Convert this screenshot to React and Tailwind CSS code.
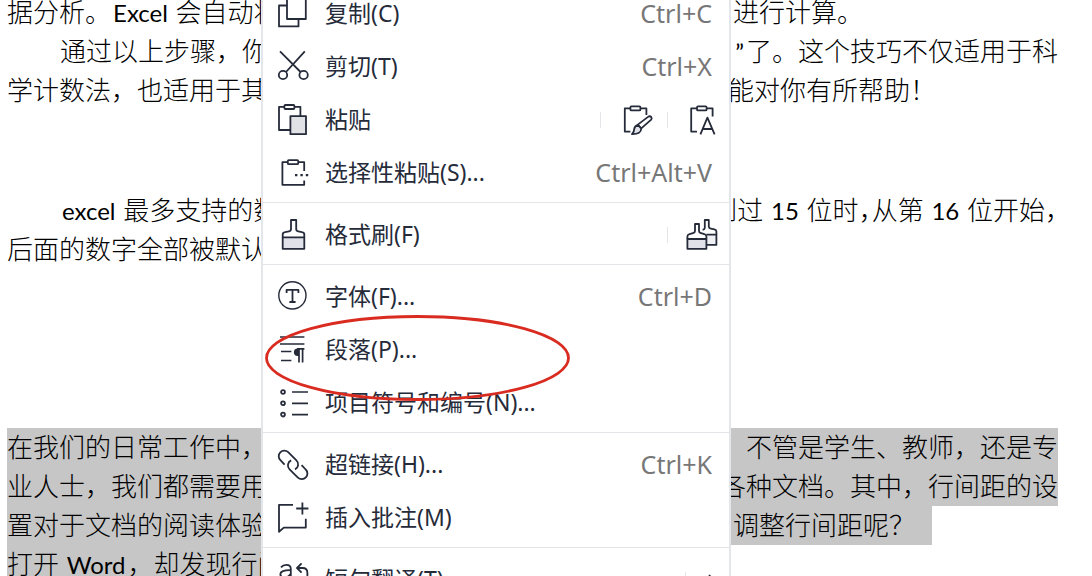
import React from "react";

const INK = "#262b3a";

function Icon({ children }) {
  return (
    <svg
      aria-hidden="true"
      viewBox="0 0 32 32"
      className="h-8 w-8 shrink-0 overflow-visible"
      fill="none"
      stroke={INK}
      strokeWidth="1.8"
      strokeLinejoin="round"
    >
      {children}
    </svg>
  );
}

const CopyIcon = () => (
  <Icon>
    <rect x="10" y="1" width="18.8" height="20" />
    <path d="M10 7.5H2V28.4H21.5V21" />
  </Icon>
);

const CutIcon = () => (
  <Icon>
    <circle cx="6" cy="24" r="4.2" />
    <circle cx="26.6" cy="24" r="4.2" />
    <path d="M3 .3 23.6 21M27.8 .3 9 21" />
  </Icon>
);

const PasteIcon = () => (
  <Icon>
    <path d="M7.4 2.8H2V26H13.4M17.4 2.8H23.4V12" />
    <rect x="7.4" y="1" width="10" height="4" rx="1" />
    <rect x="13.4" y="12.2" width="15.6" height="18" fill="#e1e2e6" />
  </Icon>
);

const PasteSpecialIcon = () => (
  <Icon>
    <path d="M10.8 5.2H5.4V27.8H27.2V23.5M21.2 5.2H27.2V14" />
    <rect x="10.8" y="3.2" width="10.4" height="4" rx="1" />
    <path d="M18 18.2h2.4M23.4 18.2h2.4M28.8 18.2h2.4" strokeWidth="2.2" />
  </Icon>
);

const BrushIcon = () => (
  <Icon>
    <path d="M5.7 18.4H27.3V29.8H5.7Z" fill="#e1e2e9" />
    <path d="M5.7 18.4V15.6Q5.7 13.6 8 13.2L12 12.4Q14 12 14 10V1H19.2V10Q19.2 12 21.2 12.4L25 13.2Q27.3 13.6 27.3 15.6V18.4" />
  </Icon>
);

const DoubleBrushIcon = () => (
  <Icon>
    <path d="M18.4 15.6H28.4V25.8H18.4" fill="#eef0f4" />
    <path d="M14.6 10.8Q16.8 10.4 16.8 9V1H20.8V7.6Q20.8 9.2 22.8 9.6L26.4 10.4Q28.4 10.9 28.4 12.4V15.6" />
    <path d="M-.6 20H18.4V29.8H-.6Z" fill="#e1e2e9" />
    <path d="M-.6 20V17.6Q-.6 15.7 1.4 15.2L5 14.2Q7 13.6 7 12V5H11V12Q11 13.6 13 14.2L16.4 15.2Q18.4 15.7 18.4 17.6V20" />
  </Icon>
);

const FontIcon = () => (
  <Icon>
    <circle cx="15.4" cy="14.4" r="13.6" strokeWidth="1.4" />
    <path d="M9.6 12V8.8H21.4V12M15.5 8.8V21M12.4 21H18.6" strokeWidth="1.8" />
  </Icon>
);

const ParagraphIcon = () => (
  <Icon>
    <path d="M3 3H27.4M3 10H27.4M4 17.6H14.4M4 26.4H14.4" strokeWidth="1.5" />
    <path d="M22 14.6H20.6A3.6 3.6 0 0 0 20.6 22H22Z" fill={INK} stroke="none" />
    <path d="M20 14.8H27.4M22 14.6V28.4M25.6 14.6V28.4" strokeWidth="1.7" />
  </Icon>
);

const ListIcon = () => (
  <Icon>
    <circle cx="6" cy="5" r="1.9" />
    <circle cx="6" cy="16.3" r="1.9" />
    <circle cx="6" cy="27.6" r="1.9" />
    <path d="M15 5H31M15 16.3H31M15 27.6H31" strokeWidth="1.7" />
  </Icon>
);

const LinkIcon = () => (
  <Icon>
    <path d="M7.6 15.6 3.4 11.2A5.5 5.5 0 0 1 11.2 3.2L19.4 11.4A5.5 5.5 0 0 1 18 20.4" />
    <path d="M24.6 16.2 28.7 20.5A5.5 5.5 0 0 1 20.9 28.6L12.6 20.4A5.5 5.5 0 0 1 14.2 11.4" />
  </Icon>
);

const CommentIcon = () => (
  <Icon>
    <path d="M16 2.8H2V29.8L6.8 25.6H28.8V16.8M25.4 .4V12.6M19.2 6.5H31.4" />
  </Icon>
);

const TranslateIcon = () => (
  <Icon>
    <path d="M4 3.4Q6 .8 9.4 .8Q13.8 .8 13.8 5V14M13.8 6.2Q3.4 6 3.4 10.2Q3.4 13.4 7.4 13.4Q11.8 13.4 13.8 9.8" />
    <path d="M24.6 -.6 20 4 24.6 8.6M20 4H25.6Q30.4 4 30.4 9V12" />
  </Icon>
);

const PasteFormatIcon = () => (
  <Icon>
    <path d="M9.4 4.4H3.8V27.6H9.4M19.4 4.4H25.4V11" />
    <rect x="9.4" y="2.4" width="10" height="4" rx="1" />
    <path d="M16.8 20.6 27.4 12.6Q29 11.8 30.2 13Q31.2 14.4 30.2 15.6L20 24.6Z" fill="#fff" />
    <path d="M11 30.2Q13.4 27.6 13.2 25Q13.8 21.6 16.8 20.8L20.2 24.4Q20.4 30.4 11 30.2Z" fill="#e1e2e9" />
  </Icon>
);

const PasteTextIcon = () => (
  <Icon>
    <path d="M9 4.4H3.2V27.6H9M18.6 4.4H24.6V12.4" />
    <rect x="9" y="2.4" width="9.6" height="4" rx="1" />
    <path d="M12.4 30.4 19.4 13.6 26.6 30.4M14.8 25H24.4" />
  </Icon>
);

function SideAction({ label, children }) {
  return (
    <>
      <span className="mr-5 h-4 w-px bg-[#e4e5e8]" />
      <button type="button" aria-label={label} className="flex">
        {children}
      </button>
    </>
  );
}

function Item({ icon, label, shortcut }) {
  return (
    <button type="button" role="menuitem" className="flex h-[53px] w-full items-center pr-[17px] pl-[14px] text-left">
      {icon}
      <span className="ml-4 flex-1 whitespace-nowrap">{label}</span>
      {shortcut && <span className="text-[25px] text-[#777777]">{shortcut}</span>}
    </button>
  );
}

function SplitItem({ icon, label, children }) {
  return (
    <div className="flex h-[53px] items-center pr-[9px]">
      <button type="button" role="menuitem" className="flex flex-1 items-center pl-[14px] text-left">
        {icon}
        <span className="ml-4 whitespace-nowrap">{label}</span>
      </button>
      <div className="flex items-center">{children}</div>
    </div>
  );
}

const Separator = () => <hr className="mt-[3px] mb-[5px] border-t border-[#e2e4e7]" />;

const Latin = ({ children }) => (
  <span className="mx-[2px] font-['Lato',sans-serif] text-[24px] leading-none font-normal">{children}</span>
);

const HalfComma = () => <span className="[font-feature-settings:'halt']">，</span>;

function Line({ left, right, indent, short }) {
  return (
    <div className={"flex h-[39px] justify-between whitespace-nowrap " + (indent ? "pl-[53px] " : "") + (short || "")}>
      <span>{left}</span>
      <span>{right}</span>
    </div>
  );
}

function ContextMenu() {
  return (
    <div
      role="menu"
      className="absolute -top-[13px] left-[261px] w-[470px] border-r-2 border-l-2 border-[#e3e7ec] bg-white font-['Noto_Sans','Noto_Sans_CJK_SC',sans-serif] text-[23px] text-[#262b3a]"
    >
      <Item icon={<CopyIcon />} label="复制(C)" shortcut="Ctrl+C" />
      <Item icon={<CutIcon />} label="剪切(T)" shortcut="Ctrl+X" />
      <SplitItem icon={<PasteIcon />} label="粘贴">
        <SideAction label="粘贴格式">
          <PasteFormatIcon />
        </SideAction>
        <span className="w-[14px]" />
        <SideAction label="只粘贴文本">
          <PasteTextIcon />
        </SideAction>
      </SplitItem>
      <Item icon={<PasteSpecialIcon />} label="选择性粘贴(S)..." shortcut="Ctrl+Alt+V" />
      <Separator />
      <SplitItem icon={<BrushIcon />} label="格式刷(F)">
        <SideAction label="连续格式刷">
          <DoubleBrushIcon />
        </SideAction>
      </SplitItem>
      <Separator />
      <Item icon={<FontIcon />} label="字体(F)..." shortcut="Ctrl+D" />
      <div className="relative">
        <Item icon={<ParagraphIcon />} label="段落(P)..." />
        <svg
          aria-hidden="true"
          viewBox="0 0 306 88"
          className="pointer-events-none absolute -top-[9px] left-px z-10 h-[88px] w-[306px]"
          fill="none"
          stroke="#d92b20"
          strokeWidth="2.8"
        >
          <ellipse cx="153.5" cy="44" rx="151" ry="41.5" />
        </svg>
      </div>
      <Item icon={<ListIcon />} label="项目符号和编号(N)..." />
      <Separator />
      <Item icon={<LinkIcon />} label="超链接(H)..." shortcut="Ctrl+K" />
      <Item icon={<CommentIcon />} label="插入批注(M)" />
      <Separator />
      <SplitItem icon={<TranslateIcon />} label="短句翻译(T)">
        <span className="mr-[18px] h-4 w-px bg-[#e4e5e8]" />
        <svg aria-hidden="true" viewBox="0 0 16 16" className="h-4 w-4" fill="none" stroke={INK} strokeWidth="1.6">
          <path d="M5 3 10 8 5 13" />
        </svg>
      </SplitItem>
    </div>
  );
}

export default function App() {
  return (
    <main className="relative h-screen overflow-hidden bg-white">
      <article className="-mt-[7px] pr-[34px] pl-[7px] font-['Noto_Sans_CJK_SC',sans-serif] text-[26px] leading-[35px] font-light text-black">
        <section>
          <Line
            left={<>据分析。<Latin>Excel</Latin> 会自动将</>}
            right="进行计算。"
            short="pr-[195px]"
          />
          <Line indent left="通过以上步骤，你" right={<><Latin>”</Latin>了。这个技巧不仅适用于科</>} />
          <Line left="学计数法，也适用于其" right="能对你有所帮助！" short="pr-[122px]" />
        </section>
        <section className="mt-[81px]">
          <Line
            indent
            left={<><Latin>excel</Latin> 最多支持的数</>}
            right={<>到过 <Latin>15</Latin> 位时<HalfComma />从第 <Latin>16</Latin> 位开始<HalfComma /></>}
          />
          <Line left="后面的数字全部被默认" />
        </section>
        <section className="mt-[159px]">
          <div className="bg-[#c6c6c6]">
            <Line left="在我们的日常工作中，" right="不管是学生、教师，还是专" />
            <Line left="业人士，我们都需要用" right="各种文档。其中，行间距的设" />
          </div>
          <div className="mr-[126px] bg-[#c6c6c6]">
            <Line left="置对于文档的阅读体验" right="调整行间距呢？" short="pr-[17px]" />
          </div>
          <div className="w-[260px] bg-[#c6c6c6]">
            <Line left={<>打开 <Latin>Word</Latin>，却发现行间</>} />
          </div>
        </section>
      </article>
      <ContextMenu />
    </main>
  );
}
